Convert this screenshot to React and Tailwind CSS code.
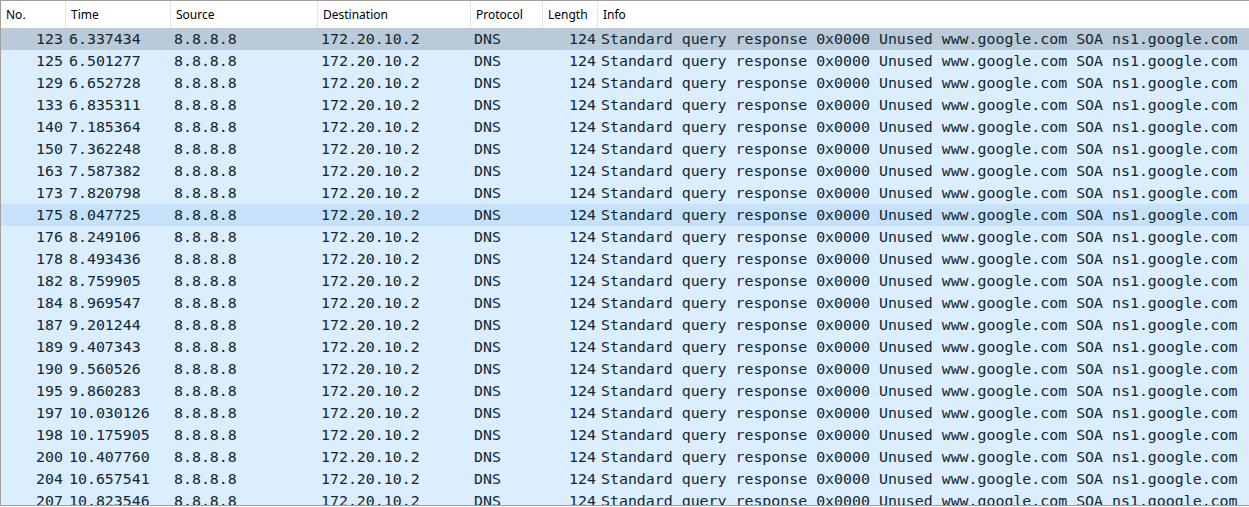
import React from "react";

const packets = [
  [123, "6.337434"],
  [125, "6.501277"],
  [129, "6.652728"],
  [133, "6.835311"],
  [140, "7.185364"],
  [150, "7.362248"],
  [163, "7.587382"],
  [173, "7.820798"],
  [175, "8.047725"],
  [176, "8.249106"],
  [178, "8.493436"],
  [182, "8.759905"],
  [184, "8.969547"],
  [187, "9.201244"],
  [189, "9.407343"],
  [190, "9.560526"],
  [195, "9.860283"],
  [197, "10.030126"],
  [198, "10.175905"],
  [200, "10.407760"],
  [204, "10.657541"],
  [207, "10.823546"],
];

const headers = [
  { label: "No.", w: "w-[65px]" },
  { label: "Time", w: "w-[105px]" },
  { label: "Source", w: "w-[147px]" },
  { label: "Destination", w: "w-[153px]" },
  { label: "Protocol", w: "w-[72px]" },
  { label: "Length", w: "w-[55px]" },
  { label: "Info", w: "flex-1" },
];

const App = () => {
  return (
    <div className="w-[1249px] h-[507px] bg-white overflow-hidden">
      <div className="h-[506px] border-t border-l border-b border-[#a0a0a0] overflow-hidden">
        {/* Column headers */}
        <div
          className="flex h-[27px] bg-white text-[12px] text-black"
          style={{ fontFamily: '"Noto Sans", "Open Sans", sans-serif' }}
        >
          {headers.map((h, i) => (
            <div
              key={h.label}
              className={`${h.w} shrink-0 flex items-center pl-[5px] pt-[1px] ${
                i < headers.length - 1 ? "border-r border-[#e5e5e5]" : ""
              }`}
            >
              {h.label}
            </div>
          ))}
        </div>

        {/* Packet rows */}
        <div
          className="text-[14.9px] text-[#12272e]"
          style={{ fontFamily: '"DejaVu Sans Mono", monospace' }}
        >
          {packets.map(([no, time], idx) => {
            let bg = "bg-[#daeeff]";
            if (idx === 0) bg = "bg-[#bacad8]";
            if (no === 175) bg = "bg-[#c6e2fb]";
            return (
              <div key={no} className={`flex h-[22px] leading-[22px] whitespace-nowrap ${bg}`}>
                <div className="w-[65px] shrink-0 text-right pr-[3px]">{no}</div>
                <div className="w-[105px] shrink-0 pl-[3px]">{time}</div>
                <div className="w-[147px] shrink-0 pl-[3px]">8.8.8.8</div>
                <div className="w-[153px] shrink-0 pl-[3px]">172.20.10.2</div>
                <div className="w-[72px] shrink-0 pl-[3px]">DNS</div>
                <div className="w-[55px] shrink-0 text-right pr-[2px]">124</div>
                <div className="flex-1 pl-[3px] overflow-hidden">
                  Standard query response 0x0000 Unused www.google.com SOA ns1.google.com
                </div>
              </div>
            );
          })}
        </div>
      </div>
    </div>
  );
};

export default App;
